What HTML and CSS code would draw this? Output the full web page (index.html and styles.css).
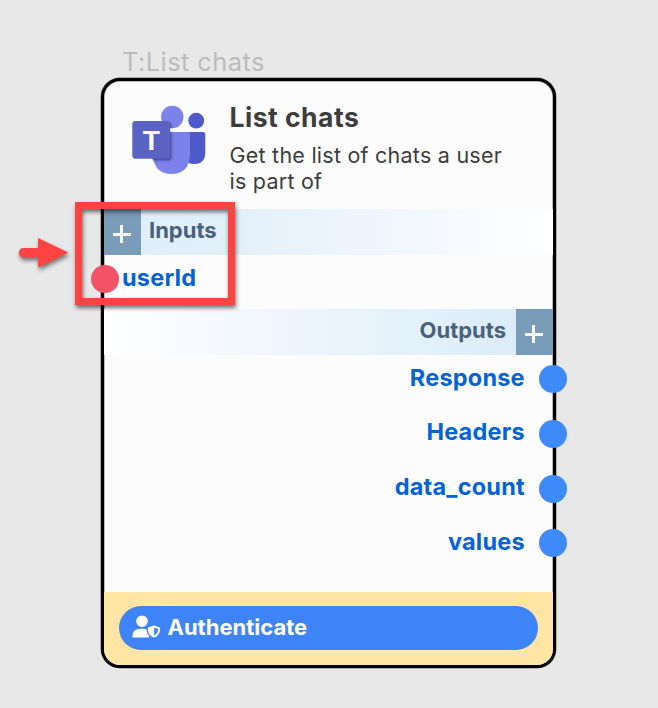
FILE: index.html
```html
<!DOCTYPE html>
<html lang="en">
<head>
<meta charset="utf-8">
<title>List chats</title>
<link rel="stylesheet" href="styles.css">
</head>
<body>
<div class="node-label"><span>T:List chats</span></div>
<main class="card">
  <header class="header">
    <svg class="logo" viewBox="0 0 76 72" width="76" height="72">
      <defs>
        <clipPath id="person"><path d="M24 27H64Q67 27 67 30V50A18 18 0 0 1 20 50V27Z"/><circle cx="40.3" cy="12" r="11.2"/></clipPath>
        <filter id="soft"><feGaussianBlur stdDeviation="1"/></filter>
      </defs>
      <circle cx="64.2" cy="15.7" r="7.9" fill="#5059c9"/>
      <path d="M50 27H71Q73.3 27 73.3 29.3V47Q73.3 59 62.5 59Q56 59 52 55Z" fill="#5059c9"/>
      <circle cx="40.3" cy="12" r="11.2" fill="#7b83eb"/>
      <path d="M21 27H55.5Q58 27 58 29.5V50Q57 69 39.5 69Q22 69 21 50Z" fill="#7b83eb"/>
      <g clip-path="url(#person)"><rect x="3" y="17.5" width="36.5" height="38" rx="3" fill="#30366f" opacity=".72" filter="url(#soft)"/></g>
      <rect x="0.3" y="16" width="38" height="37.8" rx="3" fill="#5a62c3"/>
      <text class="logo-letter" x="19.2" y="45" text-anchor="middle">T</text>
    </svg>
    <div class="heading">
      <h1><span>List chats</span></h1>
      <p>Get the list of chats a user<br>is part of</p>
    </div>
  </header>
  <section class="band inputs">
    <button class="add" aria-label="Add input"></button>
    <h2>Inputs</h2>
  </section>
  <div class="input-port"><i class="dot red"></i><span>userId</span></div>
  <section class="band outputs">
    <h2>Outputs</h2>
    <button class="add" aria-label="Add output"></button>
  </section>
  <ul class="ports">
    <li><span>Response</span><i class="dot"></i></li>
    <li><span>Headers</span><i class="dot"></i></li>
    <li><span>data_count</span><i class="dot"></i></li>
    <li><span>values</span><i class="dot"></i></li>
  </ul>
  <footer class="footer">
    <button class="auth">
      <svg width="30" height="24" viewBox="0 0 30 24">
        <circle cx="10" cy="6.2" r="5.8" fill="#fff"/>
        <path d="M.5 22.6V21Q1 13.8 8 13.8H12Q15 13.8 17 15.3V22.6Z" fill="#fff"/>
        <path d="M22 9.6L28.8 12.2V15Q28.2 20.8 22 23.4Q15.8 20.8 15.2 15V12.2Z" fill="#fff" stroke="#3f83f8" stroke-width="1.4"/>
        <path d="M22.2 12.6L26.2 14.1Q26 18.8 22.2 20.6Z" fill="#3f83f8"/>
      </svg>
      <span>Authenticate</span>
    </button>
  </footer>
</main>
<div class="highlight"></div>
<svg class="arrow" width="60" height="46" viewBox="0 0 60 46"><path d="M9 15H24V5L54.5 19.5L24 34.5V24.5H9A4.8 4.8 0 0 1 9 15Z" fill="#ff4343"/></svg>
</body>
</html>
```
FILE: styles.css
```css
* { box-sizing: border-box; }
body {
  margin: 0;
  width: 658px;
  height: 708px;
  overflow: hidden;
  position: relative;
  background: #e8e8e8;
  font-family: Inter, "Liberation Sans", sans-serif;
}
h1, h2, p, ul { margin: 0; padding: 0; }
button { border: 0; padding: 0; font: inherit; }
.node-label {
  height: 78px;
  padding: 46px 0 0 122px;
  font-size: 25.5px;
  line-height: 32px;
  letter-spacing: .4px;
  color: #bcbcbc;
}
.card {
  width: 455px;
  height: 590px;
  margin-left: 101px;
  border: 3px solid #000;
  border-radius: 19px;
  background: #fcfcfc;
  box-shadow: 0 0 0 .5px #777, inset 0 0 0 .5px #777;
  display: flex;
  flex-direction: column;
}
.header {
  height: 128px;
  flex: none;
  display: flex;
  padding: 24px 0 0 28px;
}
.logo { flex: none; }
.logo-letter { font: 700 28px "Liberation Sans", sans-serif; fill: #fff; }
.heading { padding-left: 21.5px; color: #3d3d3d; }
h1 { font-size: 26.5px; line-height: 32px; margin-top: -4px; font-weight: 700; letter-spacing: .5px; }
.heading p { font-size: 21.5px; line-height: 26px; margin-top: 9px; white-space: nowrap; letter-spacing: .24px; }
.band { height: 46px; flex: none; display: flex; }
.inputs { background: linear-gradient(90deg, #deeefa, #e3f0fa 30%, #f0f6fd 62%, #fff); }
.outputs { background: linear-gradient(270deg, #d8e9f8, #e3f1fa 30%, #f0f6fd 62%, #fff); justify-content: flex-end; }
.band h2 { font-size: 22px; line-height: 43px; font-weight: 700; color: #49617c; }
.inputs h2 { padding-left: 8px; }
.outputs h2 { padding-right: 10px; }
.add {
  width: 37px;
  height: 46px;
  background:
    linear-gradient(#fff, #fff) 9px 24px / 18px 3px no-repeat,
    linear-gradient(#fff, #fff) 16px 16px / 3px 18px no-repeat,
    #799cb8;
}
.input-port, .ports li {
  font-size: 23.5px;
  font-weight: 700;
  letter-spacing: .2px;
  color: #0563d9;
  display: flex;
  align-items: center;
}
.input-port { height: 54px; flex: none; margin-left: -13px; padding-bottom: 6px; gap: 3px; }
.input-port span { margin-top: -3px; }
.dot { width: 28px; height: 28px; flex: none; border-radius: 50%; background: #3f8afb; }
.red { background: #f45266; }
.ports { flex: 1; list-style: none; margin-right: -14.4px; }
.ports li { height: 54.8px; justify-content: flex-end; gap: 14.6px; }
.ports li:first-child { height: 48px; margin-bottom: 3.4px; }
.ports span { margin-top: -3px; }
.ports li:nth-child(2) span, .ports li:nth-child(3) span { margin-top: -5px; }
.footer { height: 73.5px; flex: none; background: #ffe6a5; border-radius: 0 0 16px 16px; padding: 14.5px 15px; }
.auth {
  width: 419px;
  height: 44px;
  border-radius: 22px;
  background: #3f83f8;
  color: #fff;
  font-size: 22px;
  font-weight: 700;
  display: flex;
  align-items: center;
  gap: 5.5px;
  padding-left: 13px;
}
.auth svg, .auth span { margin-top: -2px; }
.highlight {
  position: absolute;
  left: 75px;
  top: 202px;
  width: 160px;
  height: 103px;
  border: 7px solid #ff4343;
  filter: drop-shadow(1px 3px 2px rgba(0,0,0,.55));
}
.arrow { position: absolute; left: 14px; top: 233px; filter: drop-shadow(1px 3px 2px rgba(0,0,0,.5)); }
```
